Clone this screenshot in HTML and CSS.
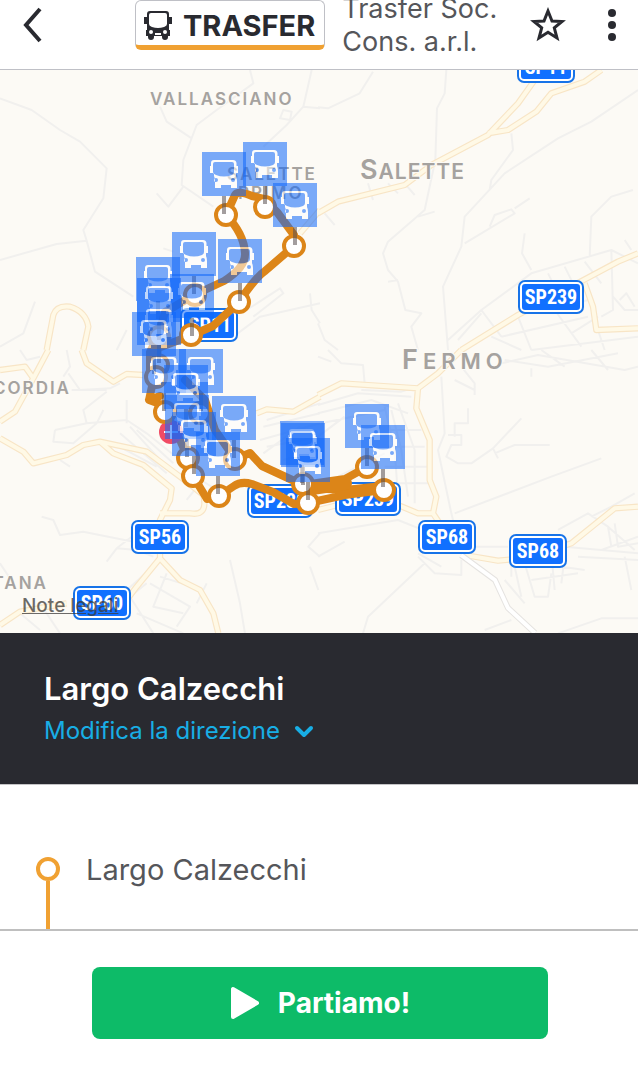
FILE: index.html
```html
<!DOCTYPE html>
<html lang="it">
<head>
<meta charset="utf-8">
<meta name="viewport" content="width=device-width, initial-scale=1">
<title>Trasfer - Largo Calzecchi</title>
<link rel="stylesheet" href="styles.css">
</head>
<body>
<header class="topbar">
  <button class="icon-button back" aria-label="Indietro">
    <svg width="24" height="36" viewBox="0 0 24 36"><path d="M20 2L6 18L20 34" class="chevron-left"/></svg>
  </button>
  <div class="line-badge">
    <svg width="28" height="30" viewBox="0 0 28 30">
      <path fill-rule="evenodd" d="M6 1H22Q25 1 25 4V7H28V14H25V20H26V26H24V27Q24 30 21 30Q18 30 18 27V26H10V27Q10 30 7 30Q4 30 4 27V26H2V20H3V14H0V7H3V4Q3 1 6 1ZM7 3Q5 3 5 5V14Q5 16 8 17Q14 19 20 17Q23 16 23 14V5Q23 3 21 3ZM7 20A2 2 0 1 0 7 24A2 2 0 1 0 7 20ZM21 20A2 2 0 1 0 21 24A2 2 0 1 0 21 20ZM11 23V25H17V23Z"/>
    </svg>
    <span>TRASFER</span>
  </div>
  <h1 class="agency">Trasfer Soc. Cons. a.r.l.</h1>
  <button class="icon-button favourite" aria-label="Preferiti">
    <svg width="36" height="36" viewBox="0 0 36 36"><path d="M18 4L22 14L32 14.500L24.300 20.800L27 31L18 25.300L9 31L11.700 20.800L4 14.500L14 14Z" class="star"/></svg>
  </button>
  <button class="icon-button menu" aria-label="Menu">
    <svg width="10" height="36" viewBox="0 0 10 36"><circle cx="5" cy="6" r="4"/><circle cx="5" cy="18" r="4"/><circle cx="5" cy="30" r="4"/></svg>
  </button>
</header>

<main class="content">
<section class="map" aria-label="Mappa">
  <svg class="map-canvas" viewBox="0 70 638 563" preserveAspectRatio="xMidYMid slice">
    <defs>
      <g id="nw-major"><path d="M140 840L160 735Q170 705 210 710Q258 725 265 770L250 840M960 420L900 490"/></g>
      <g id="ne-major"><path d="M0 430L60 395L260 345L340 285L510 195L600 100L650 30M510 190L570 180L655 125L700 70L800 35L850 0M430 840L600 735L900 575L960 550M800 640L825 710L835 780L960 775"/></g>
      <g id="sw-major"><path d="M0 60L75 50L100 85L145 0M100 85L45 185L0 215M245 0L260 40L340 95L380 72L430 75M0 265L70 305L100 340L200 315L250 285L300 275L340 310L430 345L515 415L510 450L480 510L480 625L410 710L380 750M480 625L540 690L600 720L640 790L655 850M300 275L440 305L560 395L610 435Q625 500 570 490L480 490M0 825L60 785L200 760M770 190L800 178L880 185L960 140"/></g>
      <g id="se-major"><path d="M0 135L70 100L300 115L360 70L430 0M300 115L295 175L335 270L335 390L355 440L345 490L300 490L240 465M345 490L365 520M0 480L60 465M440 615L540 632L620 625L760 580L890 475L960 470"/></g>
      <g id="stop-sign">
        <rect width="44" height="44" fill="#0f67fb"/>
        <path fill="#fff" fill-rule="evenodd" d="M12 8H31Q34 8 34.500 11V14H36V21H34V24Q35 26 35 29V36H29V33H19V36H13V29Q13 26 12 24V21H8V14H9V11Q9 8 12 8ZM13 10Q11 10 11 12V20Q11 22 14 23Q22 26 30 23Q32 22 32 20V12Q32 10 30 10ZM14 26A2 2 0 1 0 14 30A2 2 0 1 0 14 26ZM31 26A2 2 0 1 0 31 30A2 2 0 1 0 31 26Z"/>
        <path d="M22 44V62" stroke="#595052" stroke-width="4"/>
      </g>
      <g id="shield4"><rect x="-29" y="-17" width="58" height="34" rx="7" class="shield-edge"/><rect x="-26" y="-14" width="52" height="28" rx="4" class="shield-face"/></g>
      <g id="shield5"><rect x="-33" y="-17" width="66" height="34" rx="7" class="shield-edge"/><rect x="-30" y="-14" width="60" height="28" rx="4" class="shield-face"/></g>
    </defs>
    <rect y="70" width="638" height="563" fill="#fcfaf5"/>

    <g class="minor">
      <g transform="translate(0 70) scale(.33333)"><path d="M0 85L95 120L180 180L240 215L320 295L310 385L250 480L260 512L285 605L400 680M0 570L170 522L260 512M480 110L500 155L575 205M750 0L760 40L650 120L590 165L550 270L545 345L640 410M935 0L910 110L860 165L790 230M910 110L960 115M850 120L875 125L870 150L840 145ZM105 695L70 790L0 830M470 370L505 410L550 350M490 535L520 545M930 670L935 720L960 760M740 720L840 655L850 670L760 740M700 800L780 740L960 700M380 780L350 840"/></g>
      <g transform="translate(318 70) scale(.33333)"><path d="M0 112L30 115L125 70L165 5M385 0L380 70L357 115L352 270L320 420L210 515L195 550L210 600L240 635L262 720L310 730L280 770L300 840M300 440L350 425M210 635L240 630M960 60L820 155L720 205L560 310L440 440L430 530L375 650L390 840M580 190L585 240L520 330L515 360M440 520L590 430L580 418L530 435L515 470M590 415L635 385M620 490L612 550L640 600M945 360L880 380L820 440L815 560M390 810L490 720L640 610L880 540L960 580M490 720L550 800M420 810L490 730M600 740L640 840M520 800L610 840M690 610L710 650M740 590L770 650M800 575L850 640M880 540L885 720L850 740M920 510L940 540M885 680L920 720L960 720M905 690L925 670L950 710M640 700L800 650M680 730L810 690M710 720L790 830M760 790L840 740M840 780L860 840M150 340L165 390M210 340L240 370M260 340L290 375M20 430L50 465M0 760L20 810L60 840M550 800L810 740M640 840L960 800"/></g>
      <g transform="translate(0 350) scale(.33333)"><path d="M205 70L240 120L330 115L360 100M215 120L320 120M165 240L260 220L380 210L440 250L540 330M165 240L160 275L220 280L290 220L310 180M320 125L250 180L260 220M380 150V220M390 230L480 330M410 240L520 340M360 250L500 370M340 280L470 350M180 330L210 350M125 500L160 510L180 555L250 545L400 575M320 635L350 595L410 600L460 620M350 595L395 560M0 640L40 700M470 640L370 730M440 700L390 740L460 850M410 790L550 850M450 700L570 770L530 830M480 680L610 720M500 670L460 770L550 790M620 700L590 760M60 790L120 840M120 760L180 850M690 630L720 760L735 850M960 550L925 590L960 620M930 650L955 720M800 210L960 160M790 230L960 190M780 270L960 220M800 290L960 260M790 310L900 230M850 330L960 300M600 400L560 450M540 350L650 420M200 0L210 50L190 80M60 0L80 30L120 20"/></g>
      <g transform="translate(318 350) scale(.33333)"><path d="M30 0L70 40L135 45L140 100M130 120L250 125L300 110M370 80L380 250L360 300L400 490L430 610M410 490L700 380L850 325M390 255H430V285H400L385 320L420 340L460 340L525 295L610 205M525 295L540 325M530 310L590 285H695M450 175V220H410V260M430 50L470 100V135M410 90L470 120M640 55V80M550 40L660 15L920 60L960 50M560 30L690 50L900 10M670 0L740 50M820 0L870 60M0 165L120 130L280 140M0 190L160 150L270 190M10 220L200 180M200 170L230 300L240 440M220 180L250 300L270 440M240 160L290 300L290 460M210 240H310M210 290H320M200 350H330M210 400H330M60 380L200 310M0 260L80 200M0 620L80 575M0 550L240 510L440 590M300 620L350 670L430 675L430 630M320 640L150 800L135 850M300 610L370 650M500 840L580 810M720 850L850 805H960M590 650L610 740M620 640L650 740L690 740L700 670M560 690L620 760M580 610V680M660 640L800 660M640 690L780 670M700 610L710 720M740 620L730 700M720 540L810 490L870 530L880 590M820 500L880 470L950 430M870 530L950 600M890 520L900 590L960 580M850 600L960 560M920 620L940 720M780 620L960 630M450 590H570M740 590L960 610M0 20L40 35"/></g>
    </g>
    <g class="road-edge">
      <use href="#nw-major" transform="translate(0 70) scale(.33333)"/><use href="#ne-major" transform="translate(318 70) scale(.33333)"/><use href="#sw-major" transform="translate(0 350) scale(.33333)"/><use href="#se-major" transform="translate(318 350) scale(.33333)"/>
    </g>
    <g class="road-face">
      <use href="#nw-major" transform="translate(0 70) scale(.33333)"/><use href="#ne-major" transform="translate(318 70) scale(.33333)"/><use href="#sw-major" transform="translate(0 350) scale(.33333)"/><use href="#se-major" transform="translate(318 350) scale(.33333)"/>
    </g>
    <path d="M461 555L495 580L508 608L535 633" fill="none" stroke="#e5e3e0" stroke-width="6"/>
    <path d="M461 555L495 580L508 608L535 633" fill="none" stroke="#fff" stroke-width="4"/>

    <g class="place">
      <text x="150" y="105">VALLASCIANO</text>
      <text x="227" y="180">SALETTE</text>
      <text x="238" y="199">PRIMO</text>
      <text x="71" y="394" text-anchor="end">CORDIA</text>
      <text x="48" y="589" text-anchor="end">TANA</text>
    </g>
    <g class="town">
      <text x="360" y="179"><tspan class="initial">S</tspan>ALETTE</text>
      <text x="402" y="369" class="wide"><tspan class="initial">F</tspan>ERMO</text>
    </g>

    <g class="shield">
      <use href="#shield4" x="546" y="66"/><text x="546" y="74">SP11</text>
      <use href="#shield5" x="551" y="297"/><text x="551" y="304">SP239</text>
      <use href="#shield4" x="209" y="325"/><text x="210" y="332">SP11</text>
      <use href="#shield5" x="280" y="501"/><text x="280" y="508">SP239</text>
      <use href="#shield5" x="368" y="499"/><text x="368" y="506">SP239</text>
      <use href="#shield4" x="160" y="537"/><text x="160" y="544">SP56</text>
      <use href="#shield4" x="447" y="537"/><text x="447" y="544">SP68</text>
      <use href="#shield4" x="538" y="551"/><text x="538" y="558">SP68</text>
      <use href="#shield4" x="102" y="603"/><text x="102" y="610">SP60</text>
    </g>

    <g class="route">
      <path d="M194 295L224 281Q246 267 245 253Q244 234 226 215L235 195Q238 190 252 196L264 199L277 212L294 235V246L265 271Q255 278 239 302L213 326L190 336L158 348L154 377L149 400L160 404L165 412M149 400L160 396"/>
      <path d="M194 295L165 312L158 336L150 352V377M165 412L180 440L188 458L193 476L207 499L219 496L234 486Q241 481 252 484L273 492L294 504L308 503L345 495L383 490M185 380L205 400L215 430L235 459L250 453L262 466L303 485L345 479L367 467M310 488L345 490L383 486"/>
      <path d="M312 488L345 483" class="thick"/>
    </g>
    <circle cx="171" cy="432" r="12" fill="#f04b64"/>
    <path d="M164 432H178M171 425V439" stroke="#fff" stroke-width="2"/>
    <g class="stops">
      <circle cx="226" cy="215" r="10"/><circle cx="265" cy="207" r="10"/><circle cx="294" cy="246" r="10"/><circle cx="239" cy="302" r="10"/><circle cx="191" cy="335" r="10"/><circle cx="195" cy="295" r="10"/><circle cx="159" cy="337" r="10"/><circle cx="158" cy="365" r="10"/><circle cx="156" cy="377" r="10"/><circle cx="165" cy="412" r="10"/><circle cx="200" cy="413" r="10"/><circle cx="188" cy="458" r="10"/><circle cx="193" cy="476" r="10"/><circle cx="219" cy="496" r="10"/><circle cx="235" cy="459" r="10"/><circle cx="303" cy="484" r="10"/><circle cx="308" cy="503" r="10"/><circle cx="367" cy="467" r="10"/><circle cx="384" cy="490" r="10"/>
    </g>
    <g class="signs">
      <use href="#stop-sign" x="202" y="152"/><use href="#stop-sign" x="243" y="142"/><use href="#stop-sign" x="273" y="183"/><use href="#stop-sign" x="172" y="232"/><use href="#stop-sign" x="218" y="239"/>
      <use href="#stop-sign" x="136" y="257"/><use href="#stop-sign" x="170" y="274"/><use href="#stop-sign" x="137" y="278"/><use href="#stop-sign" x="137" y="301"/><use href="#stop-sign" x="132" y="312"/>
      <use href="#stop-sign" x="179" y="349"/><use href="#stop-sign" x="142" y="349"/><use href="#stop-sign" x="164" y="365"/><use href="#stop-sign" x="165" y="395"/><use href="#stop-sign" x="212" y="396"/><use href="#stop-sign" x="172" y="412"/><use href="#stop-sign" x="196" y="432"/>
      <use href="#stop-sign" x="280" y="421"/><use href="#stop-sign" x="281" y="423"/><use href="#stop-sign" x="286" y="438"/><use href="#stop-sign" x="345" y="404"/><use href="#stop-sign" x="361" y="425"/>
    </g>
  </svg>
  <a class="legal" href="#note">Note legali</a>
</section>

<section class="direction">
  <h2>Largo Calzecchi</h2>
  <button class="change">Modifica la direzione
    <svg width="20" height="14" viewBox="0 0 20 14"><path d="M3 4L10 11L17 4"/></svg>
  </button>
</section>

<ul class="itinerary">
  <li><span class="rail"></span><span class="stop-name">Largo Calzecchi</span></li>
</ul>
</main>

<footer class="actions">
  <button class="go">
    <svg width="30" height="34" viewBox="0 0 30 34"><path d="M3 3V31L27 17Z"/></svg>
    Partiamo!
  </button>
</footer>
</body>
</html>
```
FILE: styles.css
```css
*, *::before, *::after { box-sizing: border-box; }
body {
  margin: 0;
  min-height: 100vh;
  display: flex;
  flex-direction: column;
  background: #fff;
  color: #292a30;
  font-family: Inter, "Liberation Sans", sans-serif;
}
button {
  border: 0;
  padding: 0;
  background: none;
  font: inherit;
  cursor: pointer;
}
svg { display: block; flex: none; }
h1, h2 { margin: 0; }

.topbar {
  display: flex;
  align-items: center;
  height: 70px;
  padding-bottom: 19px;
  border-bottom: 1px solid #bfc0c6;
  overflow: hidden;
}
.icon-button { flex: none; display: flex; justify-content: center; fill: #292a30; }
.back { width: 135px; justify-content: flex-start; padding-left: 20px; }
.favourite { width: 76px; }
.menu { width: 52px; }
.chevron-left { fill: none; stroke: #292a30; stroke-width: 4; }
.star { fill: none; stroke: #292a30; stroke-width: 3; }
.line-badge {
  flex: none;
  display: flex;
  align-items: center;
  gap: 11px;
  height: 50px;
  padding: 4px 9px 0 8px;
  border: 1px solid #bfc0c6;
  border-bottom: 5px solid #f0a132;
  border-radius: 6px;
  fill: #292a30;
  font-size: 29px;
  font-weight: 700;
}
.agency {
  flex: 1;
  margin-left: 17px;
  color: #55565a;
  font-size: 27px;
  font-weight: 400;
  line-height: 33px;
}

.content { flex: 1; display: flex; flex-direction: column; }
.map { flex: 1 0 360px; position: relative; overflow: hidden; background: #fcfaf5; }
.map-canvas { position: absolute; width: 100%; height: 100%; }
.legal {
  position: absolute;
  left: 22px;
  bottom: 16px;
  color: rgba(60, 58, 56, .75);
  font-size: 19px;
  font-weight: 500;
}
.minor { fill: none; stroke: #f1f0ee; stroke-width: 6; stroke-linejoin: round; }
.road-edge { fill: none; stroke: #f8e5c6; stroke-width: 19; stroke-linejoin: round; }
.road-face { fill: none; stroke: #fff9e6; stroke-width: 12; stroke-linejoin: round; }
.place, .town {
  fill: #a5a29f;
  stroke: #fcfaf5;
  stroke-width: 2;
  paint-order: stroke;
}
.place { font-size: 17px; font-weight: 600; letter-spacing: 2px; }
.town { font-size: 21px; font-weight: 600; letter-spacing: 1px; }
.town .initial { font-size: 27px; }
.town .wide { font-size: 22px; letter-spacing: 5px; }
.shield-edge { fill: #1773e8; }
.shield-face { fill: #1170ff; stroke: #fff; stroke-width: 2; }
.shield text {
  fill: #fff;
  font-family: "Liberation Sans Narrow", "Roboto Condensed", Roboto, sans-serif;
  font-size: 20px;
  font-weight: 700;
  text-anchor: middle;
}
.route { fill: none; stroke: #dc8518; stroke-width: 8; stroke-linejoin: round; stroke-linecap: round; }
.route .thick { stroke-width: 14; }
.stops { fill: #fff; stroke: #dc8518; stroke-width: 4; }
.signs use { opacity: .55; }

.direction {
  flex: none;
  padding: 36px 44px 37px;
  background: #292a30;
  color: #fff;
}
.direction h2 { font-size: 31px; font-weight: 600; line-height: 40px; }
.change {
  display: flex;
  align-items: center;
  gap: 14px;
  margin-top: 6px;
  color: #18aee5;
  font-size: 24px;
  line-height: 32px;
}
.change path {
  fill: none;
  stroke: #18aee5;
  stroke-width: 4;
  stroke-linecap: round;
  stroke-linejoin: round;
}

.itinerary {
  flex: none;
  margin: 0;
  padding: 72px 36px 0;
  border-top: 1px solid #c4c4c6;
  list-style: none;
}
.itinerary li { display: flex; gap: 26px; height: 72px; }
.rail { display: flex; flex-direction: column; align-items: center; width: 24px; }
.rail::before {
  content: "";
  width: 24px;
  height: 24px;
  border: 4px solid #f0a132;
  border-radius: 50%;
}
.rail::after { content: ""; flex: 1; width: 4px; background: #f0a132; }
.stop-name { color: #55565a; font-size: 29px; line-height: 26px; }

.actions {
  flex: none;
  display: flex;
  justify-content: center;
  padding: 36px 90px 37px 92px;
  border-top: 2px solid #bfbfbf;
}
.go {
  flex: 1;
  display: flex;
  align-items: center;
  justify-content: center;
  gap: 18px;
  height: 72px;
  border-radius: 8px;
  background: #0dbb68;
  color: #fff;
  font-size: 28px;
  font-weight: 700;
}
.go path { fill: #fff; stroke: #fff; stroke-width: 4; stroke-linejoin: round; }
```
